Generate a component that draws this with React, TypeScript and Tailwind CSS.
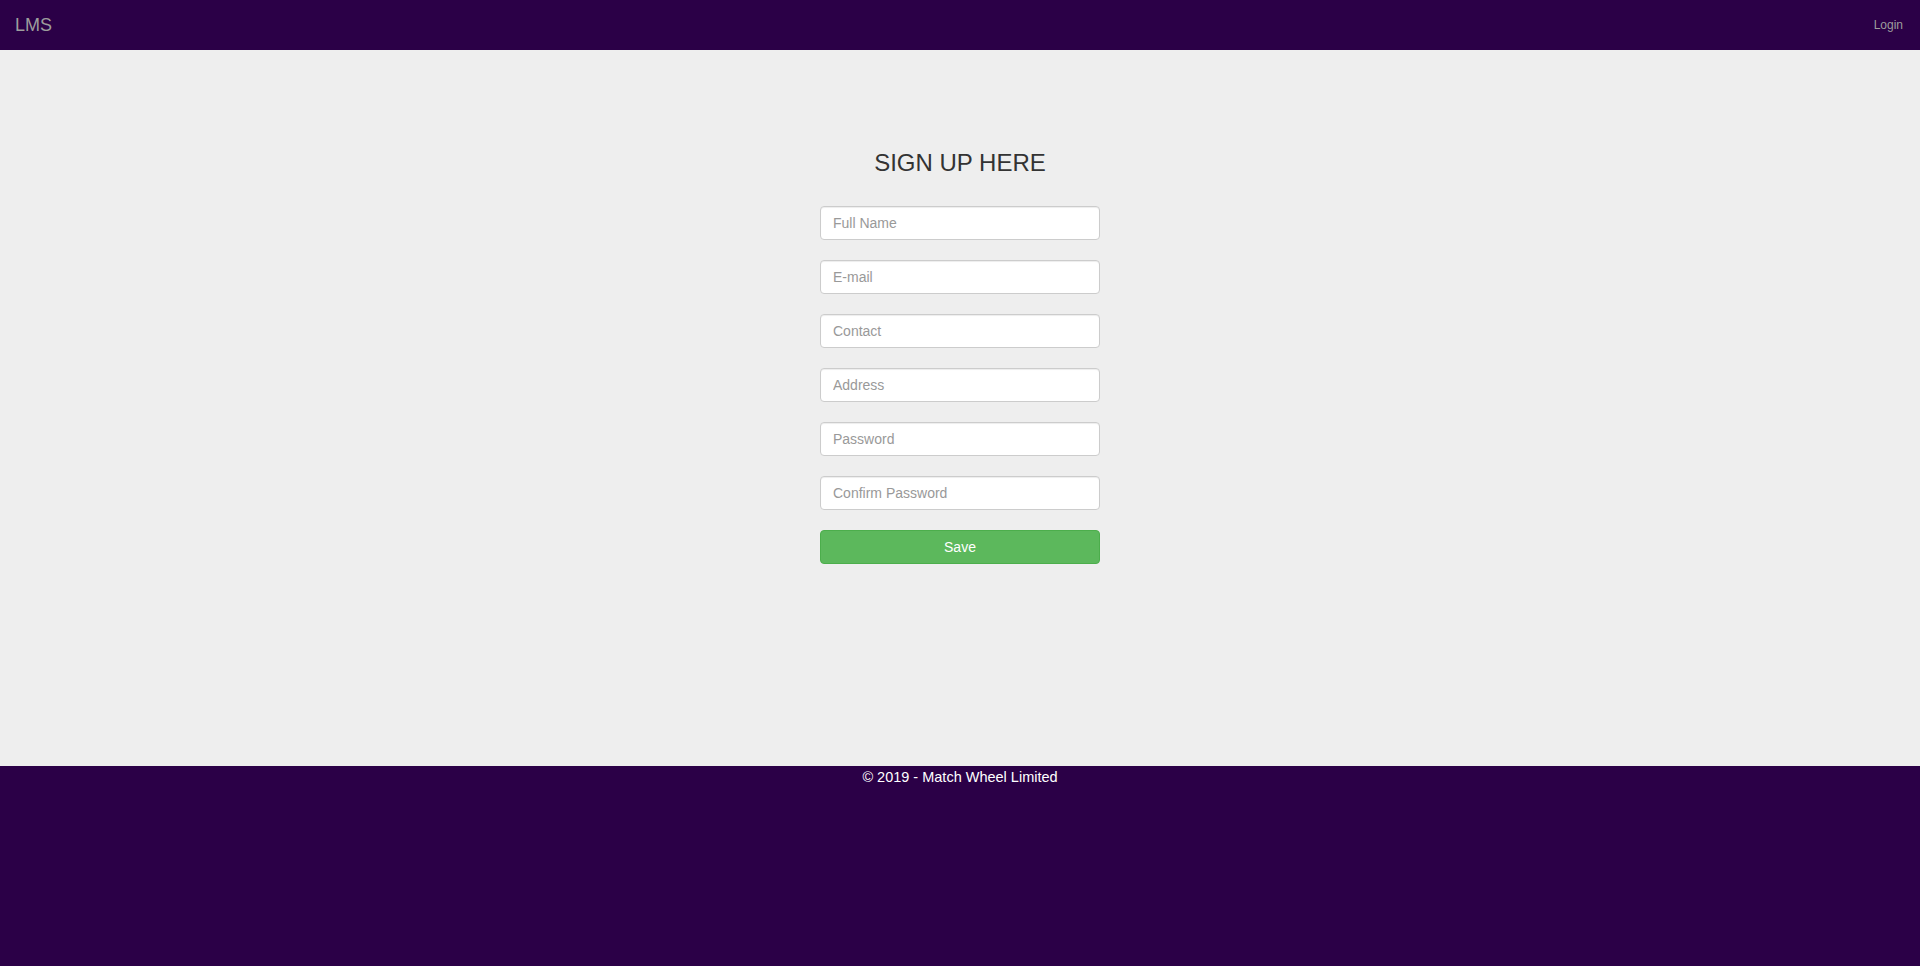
import React from 'react';

const fields = ['Full Name', 'E-mail', 'Contact', 'Address', 'Password', 'Confirm Password'];

export default function App() {
  return (
    <div className="min-h-screen flex flex-col bg-[#2b0047] font-['Liberation_Sans',Arial,sans-serif] text-sm leading-5 text-[#333]">
      {/* Top navbar */}
      <nav className="h-[50px] flex items-center justify-between bg-[#2b0047]">
        <a className="px-[15px] text-[18px] leading-5 text-[#9d9d9d]">LMS</a>
        <a className="pr-[17px] text-xs leading-5 text-[#9d9d9d]">Login</a>
      </nav>

      {/* Sign up form */}
      <main className="h-[716px] bg-[#eeeeee] flex flex-col items-center pt-[100px]">
        <h3 className="text-2xl leading-[1.1] text-[#333] mb-[30px]">SIGN UP HERE</h3>
        <form className="w-[280px] flex flex-col gap-5" onSubmit={(e) => e.preventDefault()}>
          {fields.map((f) => (
            <input
              key={f}
              type={f.includes('Password') ? 'password' : 'text'}
              placeholder={f}
              className="h-[34px] w-full px-3 py-1.5 bg-white border border-[#ccc] rounded text-sm text-[#555] placeholder:text-[#999] shadow-[inset_0_1px_1px_rgba(0,0,0,0.075)] outline-none"
            />
          ))}
          <button
            type="submit"
            className="h-[34px] w-full bg-[#5cb85c] border border-[#4cae4c] rounded text-sm text-white"
          >
            Save
          </button>
        </form>
      </main>

      {/* Footer */}
      <footer className="flex-1 pt-px text-center text-white text-[14.5px] leading-5">
        © 2019 - Match Wheel Limited
      </footer>
    </div>
  );
}
